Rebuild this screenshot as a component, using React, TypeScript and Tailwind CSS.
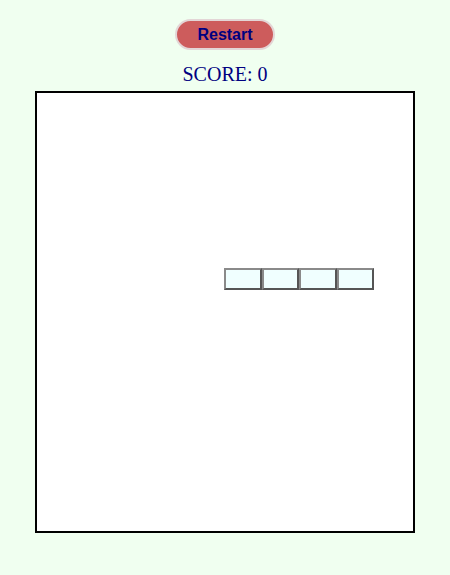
import React from "react";

export default function App() {
  const cells = [0, 1, 2, 3];
  return (
    <div className="w-[450px] h-[575px] bg-[#F0FFF0] flex flex-col items-center">
      <button className="mt-[19px] w-[100px] h-[31px] rounded-full bg-[#CD5C5C] border-2 border-[#e3d6d6] text-[#000080] font-bold text-[16px] leading-none font-['Liberation_Sans',Arial,sans-serif]">
        Restart
      </button>
      <div className="mt-[13px] text-[20px] leading-[23px] text-[#000080] font-['Liberation_Serif','Times_New_Roman',serif]">
        SCORE: 0
      </div>
      <div className="mt-[5px] w-[380px] h-[442px] border-2 border-black bg-white relative">
        <div className="absolute left-[187px] top-[175px] flex">
          {cells.map((i) => (
            <div
              key={i}
              className="w-[37.5px] h-[22px] bg-[#F0FFFF] border-2 border-t-[#8a8a8a] border-l-[#8a8a8a] border-r-[#555] border-b-[#555]"
            />
          ))}
        </div>
      </div>
    </div>
  );
}
